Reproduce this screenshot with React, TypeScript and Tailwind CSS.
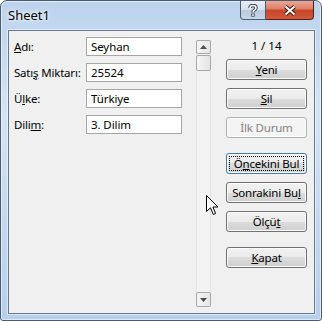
import React from "react";

const font = { fontFamily: '"Noto Sans", "Open Sans", sans-serif' };

function Field({ label, value }: { label: React.ReactNode; value: string }) {
  return (
    <div className="flex items-center h-[19px]">
      <div className="w-[72px] whitespace-nowrap text-[11.5px] tracking-[-0.2px] text-black leading-none">
        {label}
      </div>
      <div className="w-[96px] h-[19px] border border-[#a6a6a6] bg-white px-[4px] flex items-center text-[11.5px] tracking-[-0.1px] leading-none whitespace-nowrap">
        {value}
      </div>
    </div>
  );
}

function Btn({
  children,
  focused,
  disabled,
}: {
  children: React.ReactNode;
  focused?: boolean;
  disabled?: boolean;
}) {
  let cls =
    "relative w-[81px] h-[21px] rounded-[3px] border flex items-center justify-center text-[11.5px] tracking-[-0.2px] leading-none whitespace-nowrap shadow-[inset_0_0_0_1px_#fbfbfb] ";
  if (disabled) {
    cls += "border-[#adb2b5] bg-[#f4f4f4] text-[#838383]";
  } else if (focused) {
    cls +=
      "border-[#3c7fb1] text-black bg-[linear-gradient(#f2f2f2_0%,#ebebeb_50%,#dddddd_50%,#cfcfcf_100%)] shadow-[inset_0_0_0_1px_#d8eefb]";
  } else {
    cls +=
      "border-[#707070] text-black bg-[linear-gradient(#f2f2f2_0%,#ebebeb_50%,#dddddd_50%,#cfcfcf_100%)]";
  }
  return (
    <div className={cls}>
      {focused && (
        <div className="absolute inset-[2px] border border-dotted border-black" />
      )}
      <span className="relative">{children}</span>
    </div>
  );
}

export default function App() {
  return (
    <div
      className="w-[322px] h-[321px] flex flex-col border border-[#4b5b6d] rounded-t-[7px] rounded-b-[3px] bg-[linear-gradient(180deg,#bcd3ed_0%,#d3e4f5_35%,#c3d8f0_70%,#b6cfeb_100%)] shadow-[inset_0_0_0_1px_rgba(255,255,255,0.55)] overflow-hidden relative"
      style={font}
    >
      {/* title bar */}
      <div className="h-[29px] flex items-start">
        <div className="pl-[7px] pt-[5px] text-[13px] text-black [text-shadow:0_0_6px_#fff,0_0_3px_#fff]">
          Sheet1
        </div>
        <div className="flex-1" />
        <div className="flex mr-[7px]">
          <div className="w-[26px] h-[19px] border border-[#4e5d6e] border-t-0 rounded-bl-[4px] bg-[linear-gradient(#e6eef7_0%,#d4e0ec_50%,#b9c9db_50%,#c9d8e8_100%)] flex items-center justify-center">
            <svg width="10" height="13" viewBox="0 0 10 13">
              <path
                d="M2 4 Q2 1.5 5 1.5 Q8 1.5 8 4 Q8 5.5 6 6.5 Q5 7 5 8.5"
                fill="none"
                stroke="#2e3a48"
                strokeWidth="3.4"
              />
              <rect x="3.3" y="9.6" width="3.4" height="3" fill="#2e3a48" />
              <path
                d="M2 4 Q2 1.5 5 1.5 Q8 1.5 8 4 Q8 5.5 6 6.5 Q5 7 5 8.5"
                fill="none"
                stroke="#fff"
                strokeWidth="1.6"
              />
              <rect x="4.1" y="10.3" width="1.8" height="1.6" fill="#fff" />
            </svg>
          </div>
          <div className="w-[48px] h-[19px] border border-[#5a1d12] border-t-0 border-l-0 rounded-br-[4px] bg-[linear-gradient(#e9a897_0%,#dc7c66_45%,#c8452a_50%,#d05a3c_100%)] flex items-center justify-center">
            <svg width="14" height="11" viewBox="0 0 14 11">
              <path d="M2.5 1.5 L11.5 9.5 M11.5 1.5 L2.5 9.5" stroke="#3b1a14" strokeWidth="4" />
              <path d="M2.5 1.5 L11.5 9.5 M11.5 1.5 L2.5 9.5" stroke="#fff" strokeWidth="2" />
            </svg>
          </div>
        </div>
      </div>

      {/* client area */}
      <div className="ml-[7px] mr-[6px] mb-[6px] flex-1 border border-[#66798f] bg-[#f0f0f0] flex shadow-[0_0_0_1px_rgba(255,255,255,0.5)]">
        <div className="pl-[5px] pt-[6px] w-[182px] flex flex-col gap-[7px]">
          <Field label={<><u>A</u>dı:</>} value="Seyhan" />
          <Field label={<>Satı<u>ş</u> Miktarı:</>} value="25524" />
          <Field label={<>Ü<u>l</u>ke:</>} value="Türkiye" />
          <Field label={<>Dili<u>m</u>:</>} value="3. Dilim" />
        </div>

        {/* scrollbar */}
        <div className="w-[15px] ml-[5px] mt-[9px] mb-[6px] flex flex-col bg-[#f3f3f3] border-x border-[#e3e3e3]">
          <div className="h-[14px] -mx-px border border-[#a8a8a8] rounded-[2px] bg-[linear-gradient(90deg,#f4f4f4,#e6e6e6)] flex items-center justify-center">
            <svg width="7" height="4" viewBox="0 0 7 4">
              <path d="M0 4 L3.5 0 L7 4 Z" fill="#4a4a4a" />
            </svg>
          </div>
          <div className="h-[16px] mt-[1px] -mx-px border border-[#a8a8a8] rounded-[2px] bg-[linear-gradient(90deg,#f6f6f6,#e4e4e4)]" />
          <div className="flex-1" />
          <div className="h-[15px] -mx-px border border-[#a8a8a8] rounded-[2px] bg-[linear-gradient(90deg,#f4f4f4,#e6e6e6)] flex items-center justify-center">
            <svg width="7" height="4" viewBox="0 0 7 4">
              <path d="M0 0 L3.5 4 L7 0 Z" fill="#4a4a4a" />
            </svg>
          </div>
        </div>

        {/* buttons */}
        <div className="ml-[15px] pt-[8px] flex flex-col">
          <div className="h-[14px] flex items-center justify-center text-[11.5px] leading-none mb-[6px]">
            1 / 14
          </div>
          <div className="flex flex-col gap-[8px]">
            <Btn><u>Y</u>eni</Btn>
            <Btn><u>S</u>il</Btn>
            <Btn disabled>İlk Durum</Btn>
          </div>
          <div className="flex flex-col gap-[8px] mt-[15px]">
            <Btn focused>Ö<u>n</u>cekini Bul</Btn>
            <Btn>Sonrakini Bu<u>l</u></Btn>
            <Btn>Ölçü<u>t</u></Btn>
          </div>
          <div className="mt-[15px]">
            <Btn><u>K</u>apat</Btn>
          </div>
        </div>
      </div>

      {/* mouse pointer */}
      <svg
        className="absolute left-[205px] top-[194px]"
        width="13"
        height="21"
        viewBox="0 0 13 21"
      >
        <path
          d="M0.5 0.5 L0.5 16.5 L4.5 12.8 L7.3 19.5 L9.6 18.5 L6.9 12 L12 12 Z"
          fill="#fff"
          stroke="#000"
          strokeWidth="1"
          strokeLinejoin="miter"
        />
      </svg>
    </div>
  );
}
